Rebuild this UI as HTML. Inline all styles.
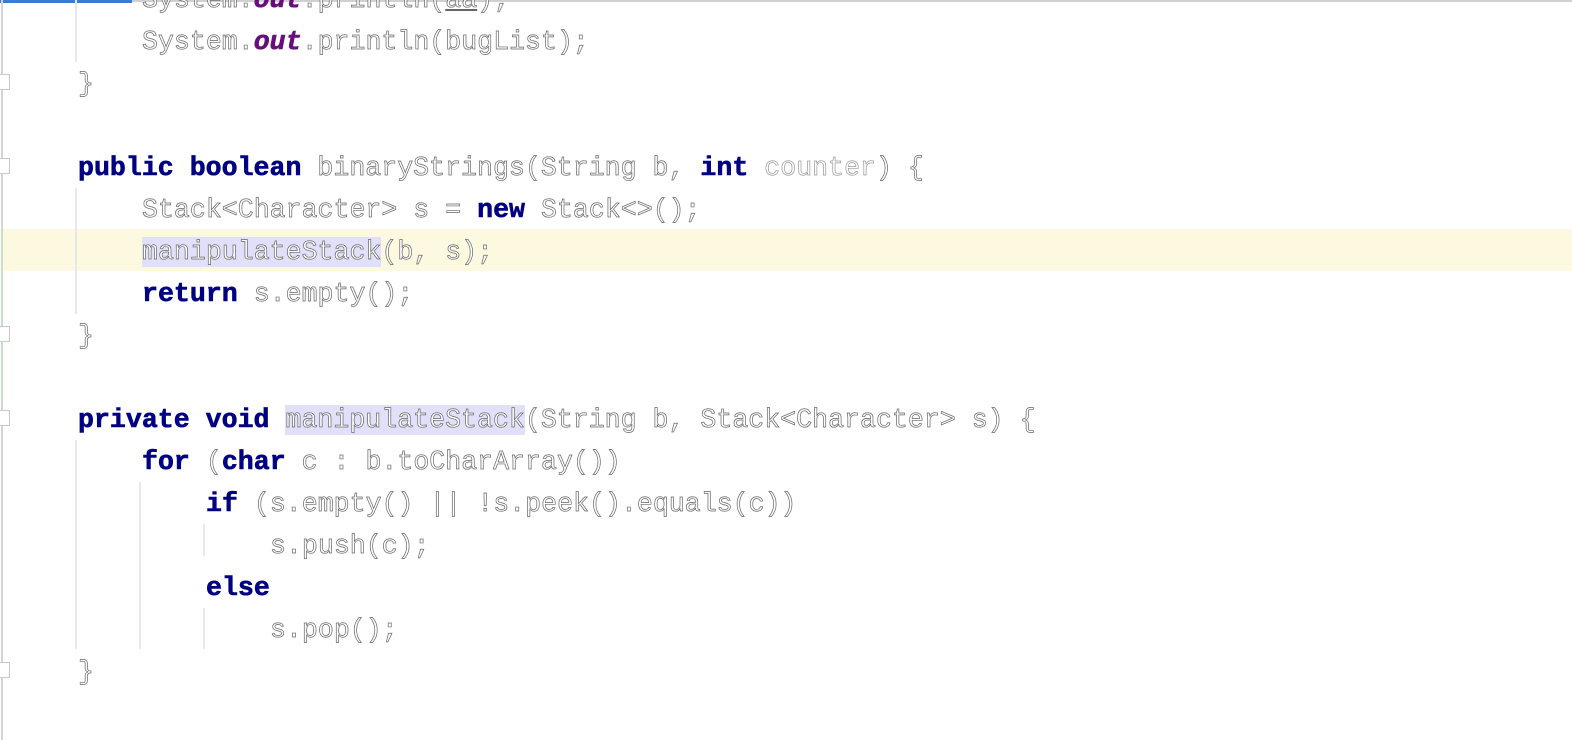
<!DOCTYPE html>
<html><head><style>
body{margin:0;width:1572px;height:740px;background:#fff;position:relative;overflow:hidden;font-family:"Liberation Mono",monospace;}
.ln{position:absolute;left:78px;height:42px;line-height:46px;font-size:26.6px;white-space:pre;color:#fff;-webkit-text-stroke:0.7px #666;}
.k{color:#000080;-webkit-text-stroke:0.6px #000080;font-weight:bold;}
.o{color:#660e7a;-webkit-text-stroke:0.6px #660e7a;font-weight:bold;font-style:italic;}
.g{color:#fff;-webkit-text-stroke:0.7px #999;}
.sel{background:#e0e0fa;}
.guide{position:absolute;width:2px;background:#e8e8e8;}
.fold{position:absolute;left:0;width:9px;height:14px;border:1px solid #c8c8c8;border-left:none;background:#fff;}
</style></head><body>
<div style="position:absolute;left:0;top:0;width:1572px;height:2px;background:#d0d0d0"></div>
<div style="position:absolute;left:0;top:0;width:132px;height:3px;background:#3d7ad4"></div>
<div style="position:absolute;left:1px;top:0;width:2px;height:740px;background:#d4d4d4"></div>
<div style="position:absolute;left:1px;top:230px;width:2px;height:170px;background:#c6e2c6"></div>
<div style="position:absolute;left:3px;top:229px;width:1569px;height:42px;background:#fdf9e0"></div>
<div class="guide" style="left:75px;top:0;height:62px"></div>
<div class="guide" style="left:75px;top:188px;height:126px"></div>
<div class="guide" style="left:75px;top:440px;height:209px"></div>
<div class="guide" style="left:139px;top:482px;height:167px"></div>
<div class="guide" style="left:203px;top:524px;height:32px"></div>
<div class="guide" style="left:203px;top:608px;height:41px"></div>
<div class="fold" style="top:74px"></div>
<div class="fold" style="top:158px"></div>
<div class="fold" style="top:326px"></div>
<div class="fold" style="top:410px"></div>
<div class="fold" style="top:662px"></div>
<div class="ln" style="top:-23px;left:142px">System.<span class="o">out</span>.println(<u>aa</u>);</div>
<div class="ln" style="top:19px;left:142px">System.<span class="o">out</span>.println(bugList);</div>
<div class="ln" style="top:61px">}</div>
<div class="ln" style="top:145px"><span class="k">public boolean</span> binaryStrings(String b, <span class="k">int</span> <span class="g">counter</span>) {</div>
<div class="ln" style="top:187px;left:142px">Stack&lt;Character&gt; s = <span class="k">new</span> Stack&lt;&gt;();</div>
<div class="ln" style="top:229px;left:142px"><span class="sel">manipulateStack</span>(b, s);</div>
<div class="ln" style="top:271px;left:142px"><span class="k">return</span> s.empty();</div>
<div class="ln" style="top:313px">}</div>
<div class="ln" style="top:397px"><span class="k">private void</span> <span class="sel">manipulateStack</span>(String b, Stack&lt;Character&gt; s) {</div>
<div class="ln" style="top:439px;left:142px"><span class="k">for</span> (<span class="k">char</span> c : b.toCharArray())</div>
<div class="ln" style="top:481px;left:206px"><span class="k">if</span> (s.empty() || !s.peek().equals(c))</div>
<div class="ln" style="top:523px;left:270px">s.push(c);</div>
<div class="ln" style="top:565px;left:206px"><span class="k">else</span></div>
<div class="ln" style="top:607px;left:270px">s.pop();</div>
<div class="ln" style="top:649px">}</div>
</body></html>
